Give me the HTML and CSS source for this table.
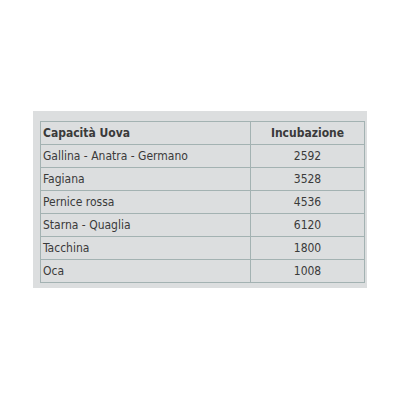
FILE: index.html
```html
<!DOCTYPE html>
<html>
<head>
<meta charset="utf-8">
<link rel="stylesheet" href="styles.css">
</head>
<body>
<div class="box">
  <table class="eggs">
    <thead>
      <tr><th class="name">Capacità Uova</th><th class="num">Incubazione</th></tr>
    </thead>
    <tbody>
      <tr><td class="name">Gallina - Anatra - Germano</td><td class="num">2592</td></tr>
      <tr><td class="name">Fagiana</td><td class="num">3528</td></tr>
      <tr><td class="name">Pernice rossa</td><td class="num">4536</td></tr>
      <tr><td class="name">Starna - Quaglia</td><td class="num">6120</td></tr>
      <tr><td class="name">Tacchina</td><td class="num">1800</td></tr>
      <tr><td class="name">Oca</td><td class="num">1008</td></tr>
    </tbody>
  </table>
</div>
</body>
</html>
```
FILE: styles.css
```css
html, body { margin: 0; padding: 0; background: #fff; }
body { padding: 111px 0 0 33px; }
.box {
  width: 325px;
  padding: 10px 2px 5px 7px;
  background: #dcdedf;
}
.eggs {
  width: 325px;
  border-collapse: collapse;
  font-family: "DejaVu Sans Condensed", "DejaVu Sans", sans-serif;
  font-size: 12px;
  color: #3a3a3a;
}
.eggs th, .eggs td {
  border: 1px solid #a3b2b2;
  height: 23px;
  padding: 0 2px;
  box-sizing: border-box;
}
.eggs th { font-weight: bold; }
.eggs .name { text-align: left; width: 210px; }
.eggs .num { text-align: center; }
```
